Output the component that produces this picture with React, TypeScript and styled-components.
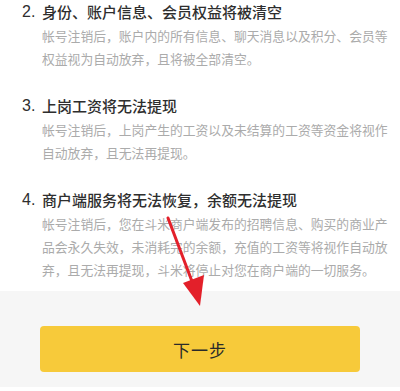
import styled, { createGlobalStyle } from "styled-components";

const GlobalStyle = createGlobalStyle`
    html, body {
        margin: 0;
        padding: 0;
        background: #fff;
    }
    body {
        font-family: "Noto Sans CJK SC", "Noto Sans", sans-serif;
    }
`;

const sections = [
    {
        num: '2.',
        title: '身份、账户信息、会员权益将被清空',
        lines: [
            '帐号注销后，账户内的所有信息、聊天消息以及积分、会员等',
            '权益视为自动放弃，且将被全部清空。',
        ],
    },
    {
        num: '3.',
        title: '上岗工资将无法提现',
        lines: [
            '帐号注销后，上岗产生的工资以及未结算的工资等资金将视作',
            '自动放弃，且无法再提现。',
        ],
    },
    {
        num: '4.',
        title: '商户端服务将无法恢复，余额无法提现',
        lines: [
            '帐号注销后，您在斗米商户端发布的招聘信息、购买的商业产',
            '品会永久失效，未消耗完的余额，充值的工资等将视作自动放',
            '弃，且无法再提现，斗米将停止对您在商户端的一切服务。',
        ],
    },
];

const Page = styled.div`
    position: relative;
    width: 400px;
    height: 391px;
    overflow: hidden;
    background: #fff;
`;

const List = styled.div`
    display: flex;
    flex-direction: column;
    gap: 24px;
    padding: 0 0 10px 22px;
`;

const Section = styled.section`
    display: grid;
    grid-template-columns: 20px 1fr;
`;

const Num = styled.span`
    font-family: "Liberation Sans", sans-serif;
    font-size: 16px;
    line-height: 24px;
    color: #2e2e2e;
`;

const Title = styled.h2`
    margin: 0;
    font-size: 15px;
    line-height: 24px;
    font-weight: 500;
    color: #2e2e2e;
`;

const Body = styled.p`
    grid-column: 2;
    margin: 0;
    font-size: 12.8px;
    line-height: 23px;
    color: #ababab;
    white-space: nowrap;
`;

const Footer = styled.div`
    display: flex;
    justify-content: center;
    height: 96px;
    padding-top: 35px;
    box-sizing: border-box;
    background: #f6f6f6;
`;

const NextButton = styled.button`
    width: 320px;
    height: 46px;
    border: none;
    border-radius: 4px;
    background: #f7ca3a;
    color: #2a2a2a;
    font-family: "Noto Sans CJK SC", sans-serif;
    font-size: 17px;
    letter-spacing: 1px;
`;

const Arrow = styled.svg`
    position: absolute;
    left: 0;
    top: 0;
    pointer-events: none;
`;

export default function App() {
    return (
        <>
            <GlobalStyle />
            <Page>
                <List>
                    {sections.map(s => (
                        <Section key={s.num}>
                            <Num>{s.num}</Num>
                            <Title>{s.title}</Title>
                            <Body>
                                {s.lines.map((l, i) => (
                                    <span key={i}>{l}{i < s.lines.length - 1 && <br />}</span>
                                ))}
                            </Body>
                        </Section>
                    ))}
                </List>
                <Footer>
                    <NextButton>下一步</NextButton>
                </Footer>
                <Arrow width="400" height="391" viewBox="0 0 400 391">
                    <line x1="168" y1="218" x2="193" y2="284" stroke="#e3202a" strokeWidth="3" strokeLinecap="round" />
                    <polygon points="183,283 204,275 200,306" fill="#e3202a" />
                </Arrow>
            </Page>
        </>
    );
}
